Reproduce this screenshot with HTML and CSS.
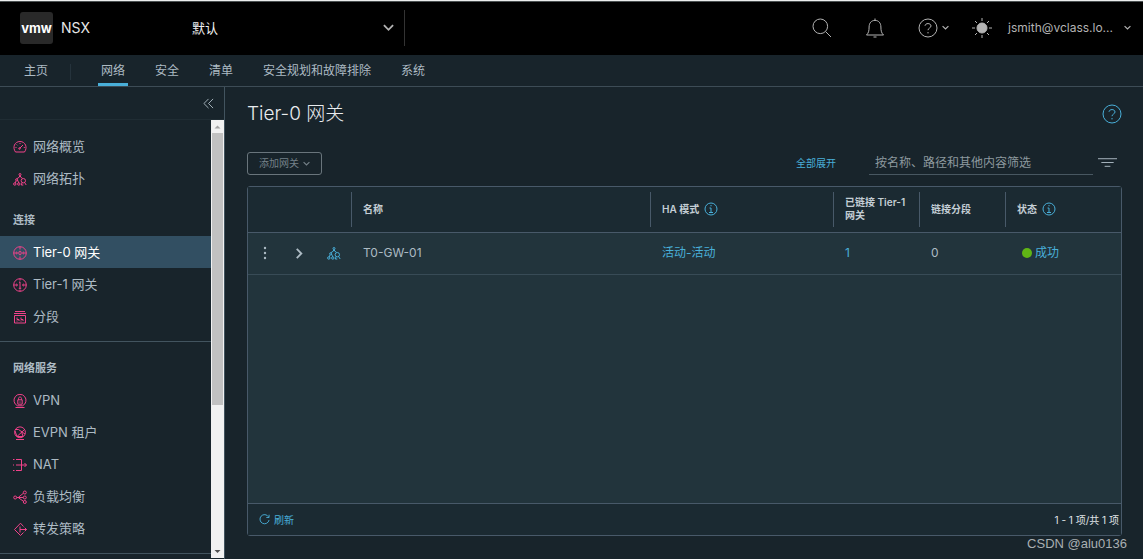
FILE: index.html
```html
<!DOCTYPE html>
<html lang="zh-CN">
<head>
<meta charset="utf-8">
<meta name="viewport" content="width=device-width, initial-scale=1">
<title>NSX - Tier-0 网关</title>
<link rel="stylesheet" href="styles.css">
</head>
<body>
<svg class="defs" aria-hidden="true">
  <symbol id="chev" viewBox="0 0 12 12"><path d="M1 3.5l5 5 5-5"/></symbol>
  <symbol id="help" viewBox="0 0 20 20"><circle cx="10" cy="10" r="9"/><path d="M7 7.8C7.2 4.8 13 4.8 13 8c0 2-3 2-3 4.2"/><path d="M10 14v1.4"/></symbol>
  <symbol id="info" viewBox="0 0 14 14"><circle cx="7" cy="7" r="6"/><path d="M5.5 6H7v4.5M5 10.5h4M7 3v1.3"/></symbol>
  <symbol id="topo" viewBox="0 0 14 14"><circle cx="7" cy="2.500" r="1"/><path d="M6.500 3.500v1.500L3.500 7M7.500 3.500v1.500L9.500 6.300M4.500 8l1.300 3"/><circle cx="3.600" cy="7.800" r="1"/><circle cx="1.800" cy="12" r="1.200"/><circle cx="5.800" cy="12" r="1.200"/><path d="M3 9l-.8 2"/><circle cx="10.300" cy="8.700" r="2.200"/><path d="M9 10.700L8.300 13M11.600 10.500l1.600 2.500M8.300 13h2"/></symbol>
</svg>

<header class="topbar">
  <span class="logo">vmw</span>
  <span class="product">NSX</span>
  <button class="scope" type="button"><span>默认</span><svg class="i12"><use href="#chev"/></svg></button>
  <div class="tools">
    <button type="button" aria-label="搜索"><svg class="i20" viewBox="0 0 20 20"><circle cx="8.3" cy="8.3" r="7.3"/><path d="M13.6 13.6l5.4 5.4"/></svg></button>
    <button type="button" aria-label="通知"><svg class="i20" viewBox="0 0 20 20"><path d="M1.5 17h17c-2-2-2.6-4-2.6-8 0-4-2.3-6.6-5.9-6.6S4.100 5 4.100 9c0 4-.6 6-2.600 8zM10 2.400V.5M8.500 19h3"/></svg></button>
    <button class="pair" type="button" aria-label="帮助"><svg class="i20"><use href="#help"/></svg><svg class="i8"><use href="#chev"/></svg></button>
    <button type="button" aria-label="主题"><svg class="i20 sun" viewBox="0 0 20 20"><circle cx="10" cy="10" r="5"/><path d="M10 0v3M10 17v3M0 10h3M17 10h3M3 3l2 2M15 15l2 2M17 3l-2 2M5 15l-2 2"/></svg></button>
    <button class="user" type="button"><span>jsmith@vclass.lo...</span><svg class="i8"><use href="#chev"/></svg></button>
  </div>
</header>

<nav class="tabs" aria-label="主导航">
  <a href="#" class="tab home">主页</a>
  <a href="#" class="tab active" aria-current="page">网络</a>
  <a href="#" class="tab">安全</a>
  <a href="#" class="tab">清单</a>
  <a href="#" class="tab">安全规划和故障排除</a>
  <a href="#" class="tab">系统</a>
</nav>

<div class="shell">
  <aside class="side">
    <div class="collapse"><button type="button" aria-label="折叠"><svg class="i12" viewBox="0 0 12 12"><path d="M6 1L1 6l5 5M11 1L6 6l5 5"/></svg></button></div>
    <div class="scroller">
      <nav class="menu" aria-label="网络">
        <div class="group first">
          <a href="#" class="item"><svg class="i14" viewBox="0 0 14 14"><path d="M2.500 12C-.8 7.500 1.500 1.500 7 1.500s7.800 6 4.500 10.500z M6.500 8.500L10 5M2.500 7.500h1M10.800 7.500h1M7 3v1M3.600 4.500l.8.8"/><circle cx="6.500" cy="8.500" r=".8"/></svg>网络概览</a>
          <a href="#" class="item"><svg class="i14"><use href="#topo"/></svg>网络拓扑</a>
        </div>
        <div class="group ruled">
          <h2 class="heading">连接</h2>
          <a href="#" class="item active" aria-current="page"><svg class="i14" viewBox="0 0 14 14"><circle cx="7" cy="7" r="6.300"/><ellipse cx="7" cy="7" rx="1.200" ry="1.900"/><path d="M7 .7V3.500M7 10.500v2.800M.7 7H4.500M9.500 7h3.800M3.200 5.800L4.500 7 3.200 8.200M10.800 5.800L9.500 7l1.300 1.200"/></svg>Tier-0 网关</a>
          <a href="#" class="item"><svg class="i14" viewBox="0 0 14 14"><circle cx="7" cy="7" r="6.300"/><path d="M6 4.500l1-.7v6.500M5.800 10.300h2.400M7 .7v1.800M7 11.500v1.800M.7 7H4.500M9.500 7h3.800M3.200 5.800L4.500 7 3.200 8.200M10.800 5.800L9.500 7l1.300 1.200"/></svg>Tier-1 网关</a>
          <a href="#" class="item"><svg class="i14" viewBox="0 0 14 14"><path d="M2 1.500h10M1 3.500h12M1.500 5.500h11v7.500h-11zM4 7.500v2h2v1.500M8 7.500v2h2v1.500M3.500 11h1M7.500 11h1"/></svg>分段</a>
        </div>
        <div class="group ruled">
          <h2 class="heading">网络服务</h2>
          <a href="#" class="item"><svg class="i14" viewBox="0 0 14 14"><path d="M4.500 11.800A6 6 0 1 1 9.500 11.800zM2.500 13.500h9M4.800 5.800h4.400v4.400H4.800zM5.500 5.800V4.500C5.500 2.500 8.500 2.500 8.500 4.500v1.300M7 7.500v1.200"/></svg>VPN</a>
          <a href="#" class="item"><svg class="i14" viewBox="0 0 14 14"><circle cx="7" cy="6.300" r="5.400"/><path d="M3 13.500h8M2.500 3.500h3L12 8M11.500 3.500L4 10.500M2 5l2 5.500h6L8.500 5.500"/></svg>EVPN 租户</a>
          <a href="#" class="item"><svg class="i14" viewBox="0 0 14 14"><path d="M3 1.500h5.500v11H3M0 1.500h1.500M0 12.500h1.500M0 7h1M3 7h10.500M11.500 5l2 2-2 2"/></svg>NAT</a>
          <a href="#" class="item"><svg class="i14" viewBox="0 0 14 14"><circle cx="2.200" cy="7.500" r="1.500"/><circle cx="11.800" cy="2.500" r="1.500"/><circle cx="11.800" cy="7.500" r="1.500"/><circle cx="11.800" cy="12" r="1.500"/><path d="M3.700 7.500h6.600M5.500 7.200l5-4M5.500 7.800l5 3.500"/></svg>负载均衡</a>
          <a href="#" class="item"><svg class="i14" viewBox="0 0 14 14"><path d="M10.500 4.500L7.500 1.200 1.500 7.500l6 6 3-3M7 4.500v6M7 7.500h6.500M11.700 5.700l1.800 1.800-1.800 1.800"/></svg>转发策略</a>
        </div>
      </nav>
      <div class="track" aria-hidden="true">
        <svg class="arrow up" viewBox="0 0 13 13"><path d="M3.500 8.500h6l-3-3z"/></svg>
        <div class="thumb"></div>
        <svg class="arrow down" viewBox="0 0 13 13"><path d="M3.500 5h6l-3 3z"/></svg>
      </div>
    </div>
  </aside>

  <main class="main">
    <div class="titlebar">
      <h1>Tier-0 网关</h1>
      <button type="button" class="blue" aria-label="帮助"><svg class="i20"><use href="#help"/></svg></button>
    </div>
    <div class="actions">
      <button type="button" class="add">添加网关<svg class="i8"><use href="#chev"/></svg></button>
      <a href="#" class="expand">全部展开</a>
      <input class="filter" type="text" aria-label="筛选" placeholder="按名称、路径和其他内容筛选">
      <button type="button" class="filterbtn" aria-label="筛选选项"><svg viewBox="0 0 20 12"><path d="M0 1.500h20M3.500 5.500h13M7 9.500h6"/></svg></button>
    </div>
    <section class="grid">
      <table>
        <colgroup><col class="c-tools"><col><col class="c-ha"><col class="c-t1"><col class="c-t1"><col class="c-state"></colgroup>
        <thead>
          <tr>
            <th aria-label="操作"></th>
            <th><div class="cell">名称</div></th>
            <th><div class="cell">HA 模式<svg class="i14"><use href="#info"/></svg></div></th>
            <th><div class="cell">已链接 Tier-1 网关</div></th>
            <th><div class="cell">链接分段</div></th>
            <th><div class="cell">状态<svg class="i14"><use href="#info"/></svg></div></th>
          </tr>
        </thead>
        <tbody>
          <tr>
            <td><div class="rowtools">
              <button type="button" aria-label="更多"><svg class="i14 dots" viewBox="0 0 14 14"><circle cx="7" cy="2" r="1.200"/><circle cx="7" cy="7" r="1.200"/><circle cx="7" cy="12" r="1.200"/></svg></button>
              <button type="button" aria-label="展开"><svg class="i12 bold" viewBox="0 0 12 12"><path d="M3 1l5 5-5 5"/></svg></button>
              <button type="button" class="blue" aria-label="拓扑"><svg class="i14"><use href="#topo"/></svg></button>
            </div></td>
            <td>T0-GW-01</td>
            <td><a href="#">活动-活动</a></td>
            <td><a href="#">1</a></td>
            <td>0</td>
            <td><a href="#" class="status"><span class="dot"></span>成功</a></td>
          </tr>
        </tbody>
      </table>
      <footer class="gridfoot">
        <button type="button" class="refresh"><svg class="i12" viewBox="0 0 12 12"><path d="M10.300 3A5 5 0 1 0 11 6.500M11 .8v3H8"/></svg>刷新</button>
        <span>1 - 1 项/共 1 项</span>
      </footer>
    </section>
    <div class="credit">CSDN @alu0136</div>
  </main>
</div>
</body>
</html>
```
FILE: styles.css
```css
* { box-sizing: border-box; }

body {
  margin: 0;
  min-height: 100vh;
  display: flex;
  flex-direction: column;
  background: #18242b;
  border-top: 1px solid #eceeee;
  color: #adbbc4;
  font: 13px/16px Inter, "Noto Sans CJK SC", sans-serif;
}

button {
  display: flex;
  align-items: center;
  padding: 0;
  border: 0;
  background: none;
  color: inherit;
  font: inherit;
}

a { color: #49afd9; text-decoration: none; }
svg { flex: none; fill: none; stroke: currentColor; stroke-width: 1; }
.defs { position: absolute; width: 0; height: 0; }
.i8 { width: 7px; height: 7px; stroke-width: 2; }
.i12 { width: 11px; height: 11px; }
.i14 { width: 14px; height: 14px; }
.i20 { width: 20px; height: 20px; stroke-width: 1; }
.bold { stroke-width: 2; }
.blue { color: #49afd9; }

.topbar {
  display: flex;
  align-items: center;
  height: 54px;
  padding: 0 12px 2px 20px;
  border-top: 1px solid #4c5253;
  background: #000;
  color: #b3b3b3;
}
.logo {
  width: 33px;
  border-radius: 3px;
  background: #292929;
  color: #fff;
  font-size: 13px;
  font-weight: 700;
  line-height: 32px;
  text-align: center;
}
.product { width: 139px; padding-left: 8px; color: #e6e6e6; font-size: 14px; }
.scope {
  width: 213px;
  height: 36px;
  justify-content: space-between;
  padding-right: 10px;
  border-right: 1px solid #333;
  color: #f0f0f0;
}
.scope svg { color: #b3b3b3; stroke-width: 2; }
.tools { display: flex; align-items: center; gap: 33px; margin-left: auto; }
.pair { gap: 4px; }
.tools .pair { margin-right: -10px; }
.sun circle { fill: currentColor; }
.user { gap: 11px; margin-left: -17px; font-size: 12px; }

.tabs {
  display: flex;
  height: 32px;
  border-bottom: 1px solid #3d4c56;
}
.tab {
  margin-right: 24px;
  padding: 0 3px;
  color: #adbbc4;
  font-size: 12px;
  line-height: 32px;
}
.home { margin: 0 24px 0 21px; }
.home::after {
  content: "";
  display: inline-block;
  height: 16px;
  margin-left: 22px;
  border-left: 1px solid #25333c;
  vertical-align: middle;
}
.tab.active { box-shadow: inset 0 -3px #49afd9; }

.shell { flex: 1; display: flex; }
.side {
  width: 225px;
  display: flex;
  flex-direction: column;
  border-right: 1px solid #42545f;
}
.collapse {
  display: flex;
  justify-content: flex-end;
  height: 33px;
  padding: 0 10px;
  border-bottom: 1px solid #202d34;
}
.scroller { flex: 1; display: flex; margin-bottom: 1px; }
.menu { flex: 1; }
.group { padding: 9px 0; }
.group.first { padding: 10px 0 1px; }
.ruled { border-bottom: 1px solid #42545f; }
.heading { margin: 0; padding-left: 13px; font-size: 11px; line-height: 32px; }
.ruled + .ruled { padding-top: 10px; }
.item {
  display: flex;
  align-items: center;
  gap: 6px;
  height: 32px;
  padding-left: 13px;
  color: #adbbc4;
}
.item svg { margin-top: 2px; color: #f1428a; }
.item.active { background: #324f62; color: #fff; }
.track {
  width: 13px;
  display: flex;
  flex-direction: column;
  background: #f1f1f1;
}
.arrow { width: 13px; height: 13px; stroke: none; }
.up { fill: #a3a3a3; }
.down { margin-top: auto; fill: #505050; }
.thumb { height: 62%; margin: 0 1px; background: #c1c1c1; }

.main {
  flex: 1;
  min-width: 0;
  display: flex;
  flex-direction: column;
  padding: 15px 21px 7px 22px;
}
.titlebar { display: flex; justify-content: space-between; align-items: center; height: 24px; }
h1 { margin: 0; color: #e9ecef; font-size: 19px; font-weight: 300; line-height: 24px; }
.actions { display: flex; align-items: center; margin: 25px 0 11px; }
.add {
  height: 23px;
  gap: 4px;
  padding: 0 11px;
  border: 1px solid #69757c;
  border-radius: 3px;
  color: #748088;
  font-size: 10px;
}
.expand { margin-left: auto; font-size: 10px; }
.filter {
  width: 224px;
  height: 24px;
  margin: 0 5px 0 33px;
  padding: 0 6px;
  border: 0;
  border-bottom: 1px solid #485761;
  background: none;
  color: #adbbc4;
  font: inherit;
  font-size: 12px;
}
.filter::placeholder { color: #8d999f; }
.filterbtn { margin-right: 5px; }
.filterbtn svg { width: 19px; height: 12px; }

.grid {
  flex: 1;
  display: flex;
  flex-direction: column;
  border: 1px solid #485969;
  border-radius: 3px;
  background: #22343c;
}
table { width: 100%; border-collapse: collapse; table-layout: fixed; }
.c-tools { width: 103px; }
.c-ha { width: 183px; }
.c-t1 { width: 86px; }
.c-state { width: 116px; }
thead { background: #1b2a32; }
th {
  height: 45px;
  padding: 0;
  border-bottom: 1px solid #485969;
  color: #c4ced5;
  font-size: 10px;
  font-weight: 600;
  line-height: 13px;
  text-align: left;
}
.cell {
  display: flex;
  align-items: center;
  gap: 5px;
  height: 35px;
  padding: 0 6px 0 11px;
  border-left: 1px solid #485969;
}
.cell svg { color: #49afd9; }
td { height: 42px; padding: 0 12px; border-bottom: 1px solid #384b56; font-size: 12px; }
.rowtools { display: flex; align-items: center; gap: 22px; }
.rowtools button:first-child { margin-left: -2px; }
.dots { fill: currentColor; stroke: none; }
.status { display: flex; align-items: center; gap: 3px; padding-left: 5px; }
.dot { width: 10px; height: 10px; border-radius: 50%; background: #60b515; }
.gridfoot {
  display: flex;
  align-items: center;
  justify-content: space-between;
  height: 32px;
  margin-top: auto;
  padding: 0 2px 0 11px;
  border-top: 1px solid #485969;
  background: #1b2a32;
  color: #e0e5e8;
  font-size: 10px;
}
.refresh { gap: 4px; color: #49afd9; }
.credit {
  margin-right: -5px;
  color: #a9afb2;
  font: 13px/16px "Liberation Sans", sans-serif;
  text-align: right;
}
```
